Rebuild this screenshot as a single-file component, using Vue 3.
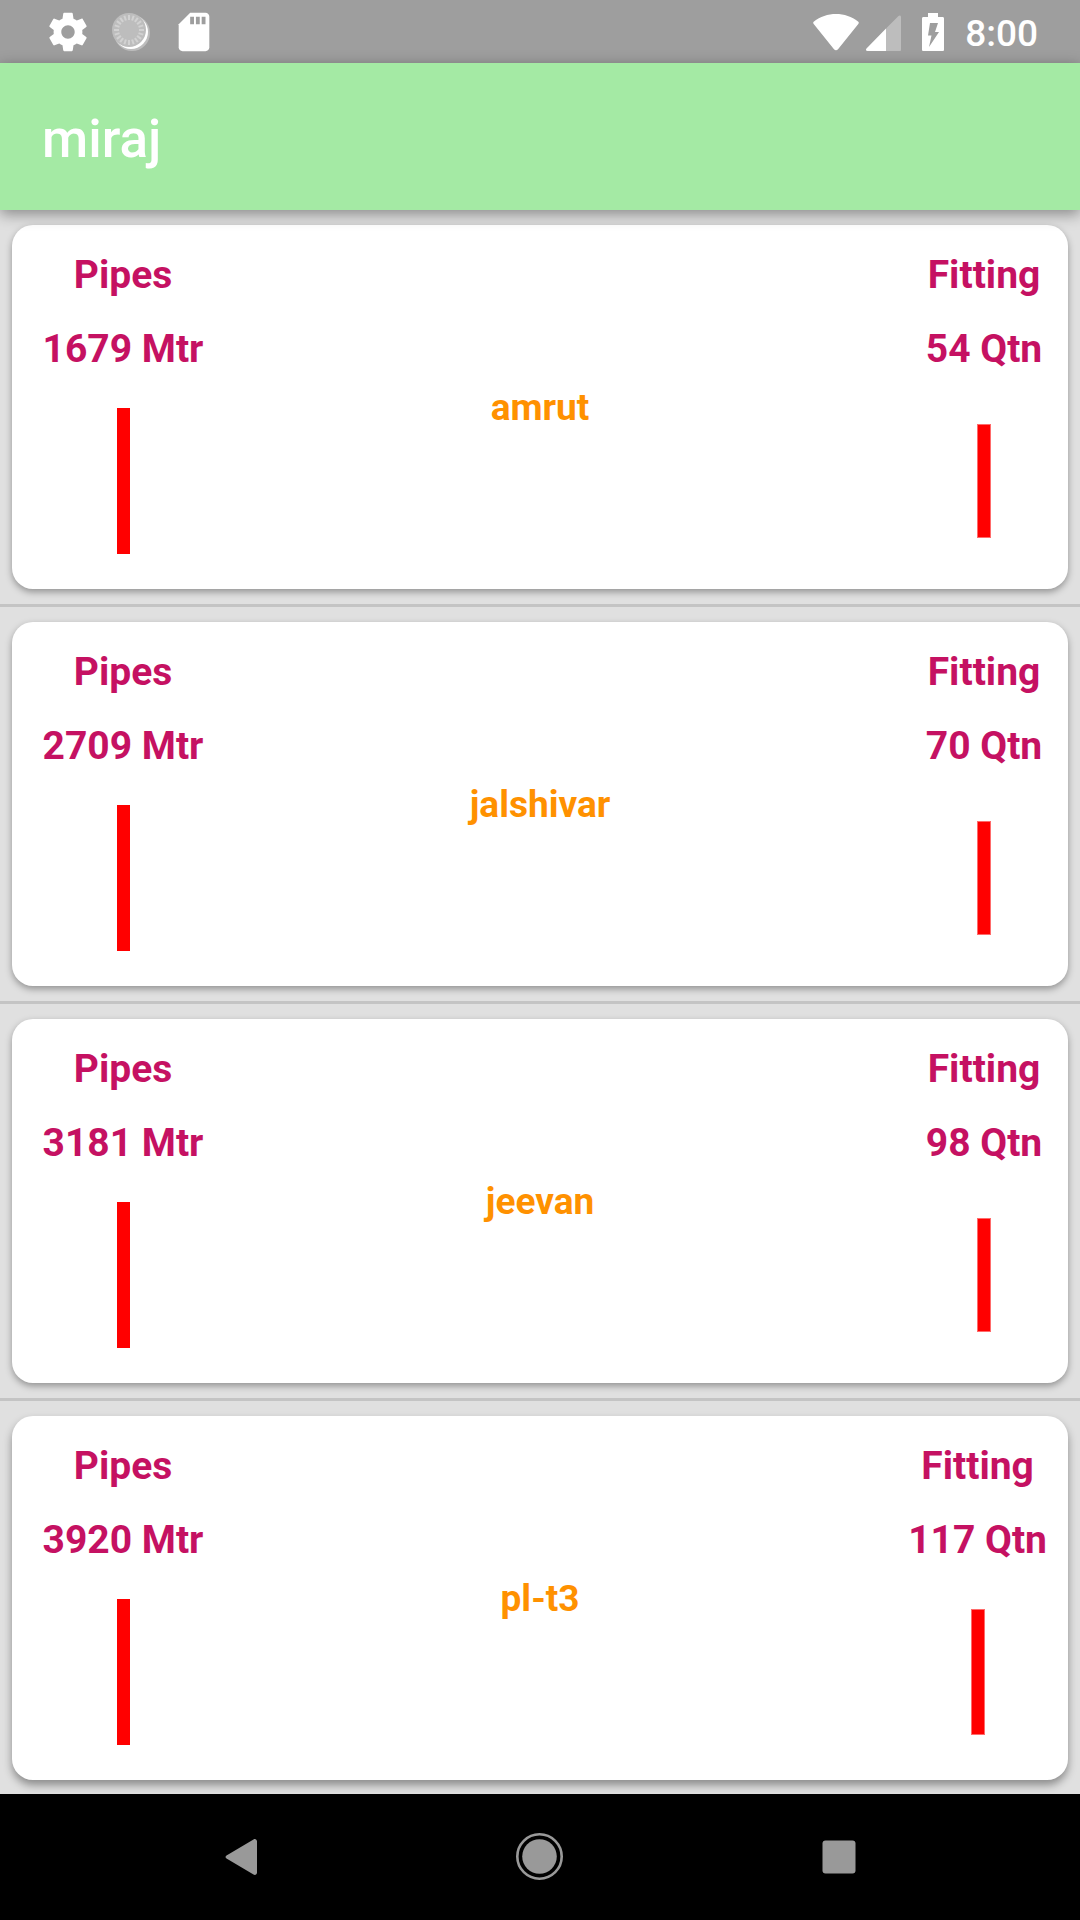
<script setup>
const schemes = [
  { name: 'amrut', pipes: 1679, fitting: 54, fittingBar: 114 },
  { name: 'jalshivar', pipes: 2709, fitting: 70, fittingBar: 114 },
  { name: 'jeevan', pipes: 3181, fitting: 98, fittingBar: 114 },
  { name: 'pl-t3', pipes: 3920, fitting: 117, fittingBar: 126 },
]

// Tick marks of the sync spinner, evenly spread around the circle
const ticks = Array.from({ length: 20 }, (_, i) => i * 18)
</script>

<template>
  <div class="screen">
    <div class="status">
      <div class="notices">
        <svg class="icon" viewBox="0 0 24 24" aria-hidden="true">
          <path
            fill="#fff"
            d="M19.43 12.98c.04-.32.07-.64.07-.98s-.03-.66-.07-.98l2.11-1.65c.19-.15.24-.42.12-.64l-2-3.46c-.12-.22-.39-.3-.61-.22l-2.49 1c-.52-.4-1.08-.73-1.69-.98l-.38-2.65C14.46 2.18 14.25 2 14 2h-4c-.25 0-.46.18-.49.42l-.38 2.65c-.61.25-1.17.59-1.69.98l-2.49-1c-.23-.09-.49 0-.61.22l-2 3.46c-.13.22-.07.49.12.64l2.11 1.65c-.04.32-.07.65-.07.98s.03.66.07.98l-2.11 1.65c-.19.15-.24.42-.12.64l2 3.46c.12.22.39.3.61.22l2.49-1c.52.4 1.08.73 1.69.98l.38 2.65c.03.24.24.42.49.42h4c.25 0 .46-.18.49-.42l.38-2.65c.61-.25 1.17-.59 1.69-.98l2.49 1c.23.09.49 0 .61-.22l2-3.46c.12-.22.07-.49-.12-.64l-2.11-1.65zM12 15.5c-1.93 0-3.5-1.57-3.5-3.5s1.57-3.5 3.5-3.5 3.5 1.57 3.5 3.5-1.57 3.5-3.5 3.5z"
          />
        </svg>
        <svg class="icon" viewBox="0 0 46 46" aria-hidden="true">
          <circle cx="24" cy="24" r="18" fill="#bdbdbd" />
          <circle cx="23" cy="23" r="17" fill="#fff" />
          <circle cx="21" cy="21" r="17" fill="#bdbdbd" />
          <g stroke="#d2d2d2" stroke-width="2">
            <line v-for="a in ticks" :key="a" x1="21" y1="6" x2="21" y2="11" :transform="`rotate(${a} 21 21)`" />
          </g>
        </svg>
        <svg class="icon" viewBox="0 0 24 24" aria-hidden="true">
          <path
            fill="#fff"
            d="M18 2h-8L4.02 8 4 20c0 1.1.9 2 2 2h12c1.1 0 2-.9 2-2V4c0-1.1-.9-2-2-2z"
          />
          <path fill="#9e9e9e" d="M10 4h2v4h-2zM13 4h2v4h-2zM16 4h2v4h-2z" />
        </svg>
      </div>
      <div class="system">
        <div class="signals">
          <svg width="46" height="38" viewBox="0 0 46 38" aria-hidden="true">
            <path
              fill="#fff"
              d="M1 8.500C7 3.500 15 1 23 1s16 2.500 22 7.500c1 .8 1 1.500.3 2.500L25 36.200c-1.200 1.500-2.800 1.500-4 0L.7 11c-.7-1-.7-1.700.3-2.500z"
            />
          </svg>
          <svg width="36" height="38" viewBox="0 0 36 38" aria-hidden="true">
            <path fill="#bdbdbd" d="M21 15.500 33.500 3c1-1 2.500-.5 2.500 1v32.500c0 1-.5 1.500-1.500 1.500H21z" />
            <path fill="#fff" d="M21 15.500V38H2.500C1 38 .5 36.500 1.500 35.500z" />
          </svg>
        </div>
        <svg width="22" height="38" viewBox="0 0 22 38" aria-hidden="true">
          <path fill="#fff" d="M6 0h10v4h4.500c1 0 1.500.6 1.500 1.500v31c0 1-.5 1.500-1.500 1.500h-19C.5 38 0 37.500 0 36.500v-31C0 4.600.5 4 1.500 4H6z" />
          <path fill="#9e9e9e" d="M8 10h8l-3 9h4L7 34l2.500-11.500H6z" />
        </svg>
        <time class="clock">8:00</time>
      </div>
    </div>

    <header class="bar">
      <h1 class="title">miraj</h1>
    </header>

    <ul class="list">
      <li v-for="s in schemes" :key="s.name" class="item">
        <article class="card">
          <div class="measure pipes">
            <span class="line">Pipes</span>
            <span class="line">{{ s.pipes }} Mtr</span>
            <div class="chart"><div class="level full"></div></div>
          </div>
          <h2 class="name">{{ s.name }}</h2>
          <div class="measure fitting">
            <span class="line">Fitting</span>
            <span class="line">{{ s.fitting }} Qtn</span>
            <div class="chart"><div class="level soft" :style="{ height: s.fittingBar + 'px' }"></div></div>
          </div>
        </article>
      </li>
    </ul>

    <nav class="nav">
      <button type="button" aria-label="Back">
        <svg width="48" height="48" viewBox="0 0 48 48" aria-hidden="true">
          <path
            fill="#999"
            d="M9.500 22.500 36.500 6.500c1.600-1 3.500 0 3.500 2v31c0 2-1.900 3-3.500 2L9.500 25.500c-1.300-.8-1.300-2.200 0-3z"
          />
        </svg>
      </button>
      <button type="button" aria-label="Home">
        <svg width="48" height="48" viewBox="0 0 48 48" aria-hidden="true">
          <circle cx="23.500" cy="23.500" r="22.200" fill="none" stroke="#999" stroke-width="2.600" />
          <circle cx="23.500" cy="23.500" r="17.300" fill="#999" />
        </svg>
      </button>
      <button type="button" aria-label="Recent apps">
        <svg width="48" height="48" viewBox="0 0 48 48" aria-hidden="true">
          <rect x="7.500" y="7.500" width="33" height="33" rx="3" fill="#999" />
        </svg>
      </button>
    </nav>
  </div>
</template>

<style>
body {
  margin: 0;
  background: #e0e0e0;
}
</style>

<style scoped>
.screen {
  display: flex;
  flex-direction: column;
  min-height: 100vh;
  background: #e0e0e0;
  font-family: Roboto, "Liberation Sans", sans-serif;
}

svg {
  display: block;
}

.status {
  display: flex;
  align-items: center;
  justify-content: space-between;
  height: 63px;
  padding: 0 42px 0 45px;
  background: #9e9e9e;
  color: #fff;
}

.notices {
  display: flex;
  gap: 17px;
}

.icon {
  width: 46px;
  height: 46px;
}

.system {
  display: flex;
  align-items: center;
  gap: 21px;
}

.signals {
  display: flex;
  gap: 6px;
}

.clock {
  padding-top: 4px;
  font-size: 37px;
  font-weight: 500;
  line-height: 59px;
}

.bar {
  position: relative;
  display: flex;
  align-items: center;
  box-sizing: border-box;
  height: 147px;
  padding: 4px 42px 0;
  background: #a4eaa4;
  box-shadow: 0 4px 14px rgba(0, 0, 0, 0.4);
}

.title {
  margin: 0;
  color: #fff;
  font-size: 53px;
  font-weight: 500;
}

.list {
  flex: 1;
  margin: 0;
  padding: 0;
  list-style: none;
}

.item {
  padding: 15px 12px;
}

.item + .item {
  border-top: 3px solid #c4c4c4;
}

.item:last-child {
  padding-bottom: 14px;
}

.card {
  display: grid;
  grid-template-columns: 1fr auto 1fr;
  align-items: center;
  padding: 13px 21px 35px;
  border-radius: 21px;
  background: #fff;
  box-shadow: 0 3px 7px rgba(0, 0, 0, 0.35);
}

.item:last-child .card {
  box-shadow: 0 5px 8px rgba(0, 0, 0, 0.38);
}

.measure {
  display: flex;
  flex-direction: column;
  align-items: center;
  color: #c51162;
  font-size: 39px;
  font-weight: 700;
}

.pipes {
  justify-self: start;
  min-width: 180px;
}

.fitting {
  justify-self: end;
  min-width: 126px;
}

.line {
  line-height: 74px;
}

.chart {
  display: flex;
  align-items: center;
  height: 146px;
  margin-top: 22px;
}

.level {
  box-sizing: border-box;
  width: 13px;
  background: #f00;
}

.level.full {
  height: 100%;
}

.level.soft {
  width: 14px;
  border: 1px solid #ff6b6b;
}

.name {
  margin: 24px 0 0;
  color: #ff9100;
  font-size: 37px;
  font-weight: 700;
  line-height: 44px;
}

.nav {
  display: flex;
  height: 126px;
  padding: 0 92px;
  background: #000;
}

.nav button {
  display: flex;
  flex: 1;
  align-items: center;
  justify-content: center;
  padding: 0;
  border: 0;
  background: none;
  cursor: pointer;
}
</style>
